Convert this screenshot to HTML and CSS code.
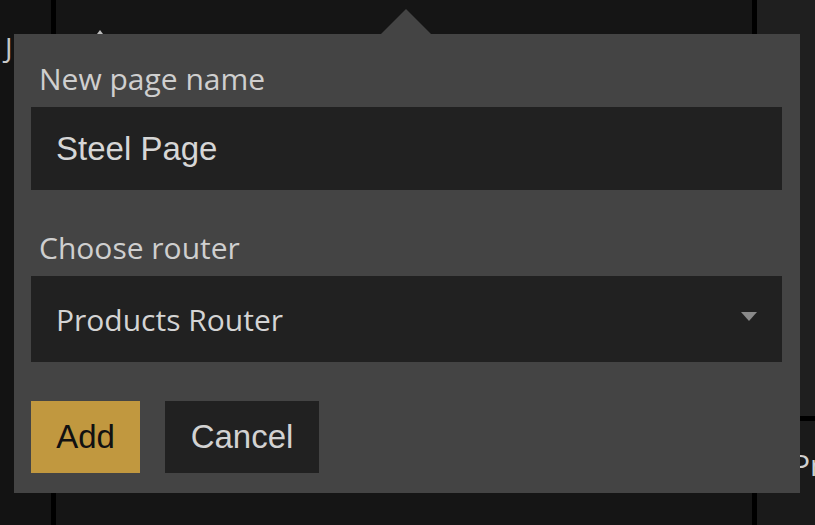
FILE: index.html
```html
<!DOCTYPE html>
<html>
<head>
<meta charset="utf-8">
<link rel="stylesheet" href="styles.css">
</head>
<body>
<div class="app">
  <div class="col-left"><span class="hook">J</span></div>
  <div class="divider"></div>
  <div class="col-main"><span class="caret"></span></div>
  <div class="divider"></div>
  <div class="col-right">
    <div class="panel-top"></div>
    <div class="hbar"></div>
    <div class="panel-bottom"><span class="peek">Products</span></div>
  </div>
</div>

<div class="popover">
  <div class="field">
    <label class="label first" for="pagename">New page name</label>
    <div class="input" id="pagename">Steel Page</div>
  </div>
  <div class="field">
    <label class="label second">Choose router</label>
    <div class="select">
      <span>Products Router</span>
      <span class="arrow"></span>
    </div>
  </div>
  <div class="actions">
    <button class="btn btn-add">Add</button>
    <button class="btn btn-cancel">Cancel</button>
  </div>
</div>
</body>
</html>
```

FILE: styles.css
```css
* { box-sizing: border-box; }

html, body {
  margin: 0;
  padding: 0;
  width: 815px;
  height: 525px;
  overflow: hidden;
  background: #151515;
  font-family: "Open Sans", "Noto Sans", sans-serif;
}

.app {
  display: grid;
  grid-template-columns: 51px 5px 696px 5px 1fr;
  height: 525px;
}

.col-left {
  background: #131313;
  position: relative;
  overflow: hidden;
}

.hook {
  position: absolute;
  left: 5px;
  top: 33px;
  font-size: 28px;
  line-height: 1;
  color: #c8c8c8;
}

.divider { background: #000; }

.col-main {
  background: #151515;
  position: relative;
}

.caret {
  position: absolute;
  left: 41px;
  top: 30px;
  width: 0;
  height: 0;
  border-left: 3px solid transparent;
  border-right: 3px solid transparent;
  border-bottom: 4px solid #bdbdbd;
}

.col-right {
  display: flex;
  flex-direction: column;
  overflow: hidden;
}

.panel-top {
  height: 416px;
  background: #1f1f1f;
}

.hbar {
  height: 5px;
  background: #000;
}

.panel-bottom {
  flex: 1;
  background: #1a1a1a;
  padding-left: 35px;
  padding-top: 24px;
  white-space: nowrap;
}

.peek {
  font-size: 30px;
  line-height: 40px;
  color: #cfcfcf;
}

.popover {
  position: absolute;
  left: 14px;
  top: 34px;
  width: 786px;
  height: 459px;
  background: #444444;
  padding: 17px 18px 20px 17px;
  display: flex;
  flex-direction: column;
}

.popover::before {
  content: "";
  position: absolute;
  left: 367px;
  top: -25px;
  width: 0;
  height: 0;
  border-left: 25px solid transparent;
  border-right: 25px solid transparent;
  border-bottom: 25px solid #444444;
}

.label {
  display: block;
  font-size: 30px;
  line-height: 40px;
  color: #cfcfcf;
  padding-left: 8px;
}

.label.first { padding-top: 8px; padding-bottom: 8px; }
.label.second { padding-top: 38px; padding-bottom: 8px; }

.input {
  height: 83px;
  background: #212121;
  display: flex;
  align-items: center;
  padding-left: 25px;
  font-family: "Liberation Sans", Arial, sans-serif;
  font-size: 33px;
  color: #d6d6d6;
}

.select {
  position: relative;
  height: 86px;
  background: #212121;
  display: flex;
  align-items: center;
  padding-left: 25px;
  font-size: 30px;
  color: #d4d4d4;
}

.arrow {
  position: absolute;
  right: 25px;
  top: 36px;
  width: 0;
  height: 0;
  border-left: 8.5px solid transparent;
  border-right: 8.5px solid transparent;
  border-top: 9px solid #8a8a8a;
}

.actions {
  display: flex;
  gap: 25px;
  margin-top: 39px;
}

.btn {
  height: 72px;
  border: 0;
  margin: 0;
  padding: 0;
  font-family: "Liberation Sans", Arial, sans-serif;
  font-size: 33px;
  cursor: pointer;
  text-align: center;
}

.btn-add {
  width: 109px;
  background: #c1983f;
  color: #111;
}

.btn-cancel {
  width: 154px;
  background: #212121;
  color: #d2d2d2;
}
```
